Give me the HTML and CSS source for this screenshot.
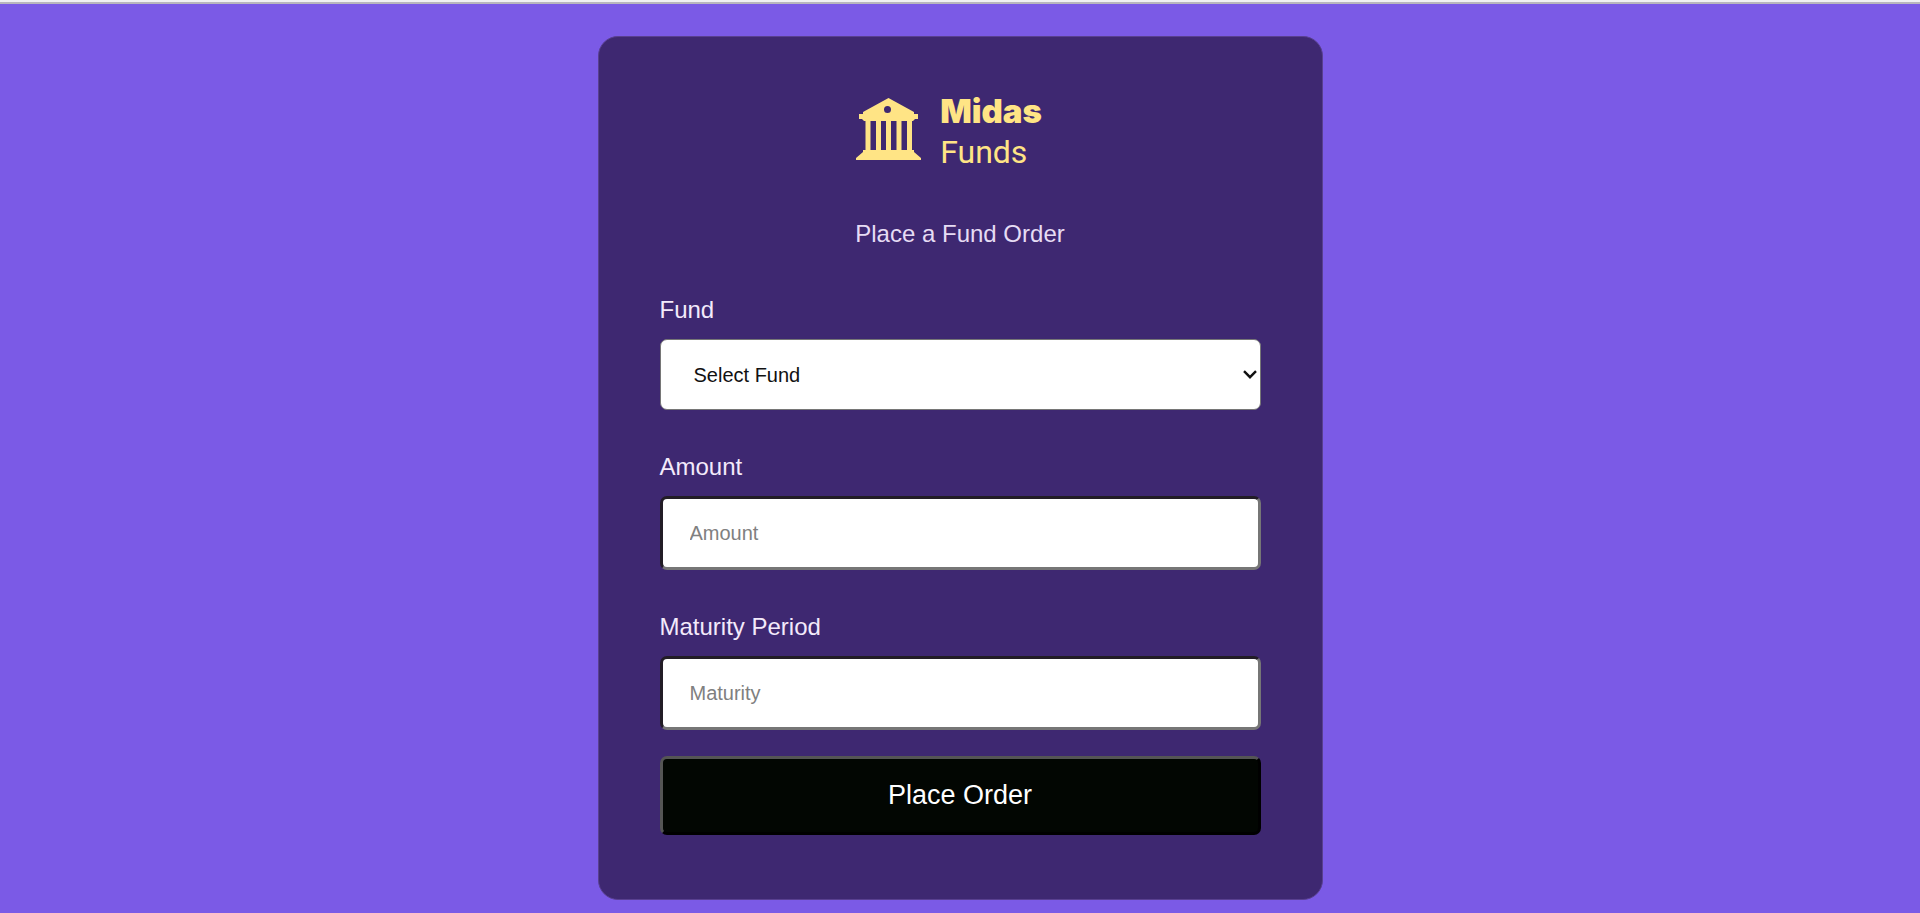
FILE: index.html
```html
<!DOCTYPE html>
<html lang="en">
<head>
<meta charset="utf-8">
<meta name="viewport" content="width=device-width, initial-scale=1">
<title>Midas Funds</title>
<link rel="stylesheet" href="styles.css">
</head>
<body>
<main class="card">
  <div class="logo">
    <svg class="logo-icon" viewBox="0 0 66 62" aria-hidden="true">
      <path fill-rule="evenodd" d="M32.500 0 58 14V16H62V21H59L57 23H8L6 21H3V16H7V14ZM31.500 8a3.500 3.500 0 1 0 0 7 3.500 3.500 0 1 0 0-7Z"/>
      <path d="M9.500 22h5v31h-5zM20 22h5v31h-5zM30 22h5v31h-5zM40.500 22h5v31h-5zM51 22h5v31h-5zM7 52H58V54L65 60V62H0V60L7 54Z"/>
    </svg>
    <div class="logo-text">
      <span class="logo-name">Midas</span>
      <span class="logo-sub">Funds</span>
    </div>
  </div>
  <h1 class="title">Place a Fund Order</h1>
  <form class="form">
    <div class="field">
      <label class="label" for="fund">Fund</label>
      <div class="select-box">
        <select class="select" id="fund"><option>Select Fund</option></select>
        <svg class="chevron" viewBox="0 0 14 9" aria-hidden="true"><path d="M1 1.200 7 7.200 13 1.200"/></svg>
      </div>
    </div>
    <div class="field">
      <label class="label" for="amount">Amount</label>
      <input class="input" id="amount" type="text" placeholder="Amount">
    </div>
    <div class="field">
      <label class="label" for="maturity">Maturity Period</label>
      <input class="input" id="maturity" type="text" placeholder="Maturity">
    </div>
    <button class="submit" type="button">Place Order</button>
  </form>
</main>
</body>
</html>
```
FILE: styles.css
```css
* {
  box-sizing: border-box;
}

html {
  border-top: 2px solid #f1f0f2;
  background: #7b5ae6;
}

body {
  margin: 0;
  padding: 32px 16px 13px;
  border-top: 2px solid #b9b6bd;
  font-family: "Liberation Sans", Arial, sans-serif;
  color: #f3eafb;
}

.card {
  max-width: 725px;
  margin: 0 auto;
  padding: 54px 61px 64px;
  border: 1px solid #594090;
  border-radius: 20px;
  background: #3e2871;
}

.logo {
  display: flex;
  justify-content: center;
  gap: 18px;
  padding-right: 22px;
  color: #ffe485;
}

.logo-icon {
  width: 66px;
  height: 62px;
  margin-top: 7px;
  fill: currentColor;
}

.logo-text {
  display: flex;
  flex-direction: column;
  line-height: 41px;
}

.logo-name {
  font-family: Inter, "Arial Black", sans-serif;
  font-size: 33px;
  font-weight: 900;
}

.logo-sub {
  font-family: Roboto, sans-serif;
  font-size: 32px;
}

.title {
  margin: 47px 0 0;
  font-size: 24px;
  font-weight: 400;
  line-height: 28px;
  text-align: center;
  color: #e6dcf4;
}

.form {
  display: flex;
  flex-direction: column;
  gap: 26px;
  margin-top: 48px;
}

.field {
  display: flex;
  flex-direction: column;
  gap: 15px;
}

.field + .field {
  margin-top: 17px;
}

.label {
  font-size: 24px;
  line-height: 28px;
}

.select,
.input,
.submit {
  display: block;
  width: 100%;
  margin: 0;
  border-radius: 7px;
  font-family: inherit;
  font-size: 20px;
  line-height: 24px;
}

.select-box {
  position: relative;
}

.select {
  appearance: none;
  height: 71px;
  padding: 0 29px 0 33px;
  border: 1px solid #767676;
  background: #fff;
  color: #111;
}

.chevron {
  position: absolute;
  top: 31px;
  right: 4px;
  width: 14px;
  height: 9px;
  fill: none;
  stroke: #111;
  stroke-width: 2.4;
  pointer-events: none;
}

.input {
  height: 74px;
  padding: 0 27px;
  border: 3px solid;
  border-color: #221d26 #767676 #767676 #221d26;
  background: #fff;
}

.input::placeholder {
  color: #808080;
}

.submit {
  padding: 20px 24px 21px;
  border: 3px solid;
  border-color: #555 #000 #000 #555;
  background: #020602;
  font-size: 27px;
  line-height: 32px;
  color: #fff;
}
```
